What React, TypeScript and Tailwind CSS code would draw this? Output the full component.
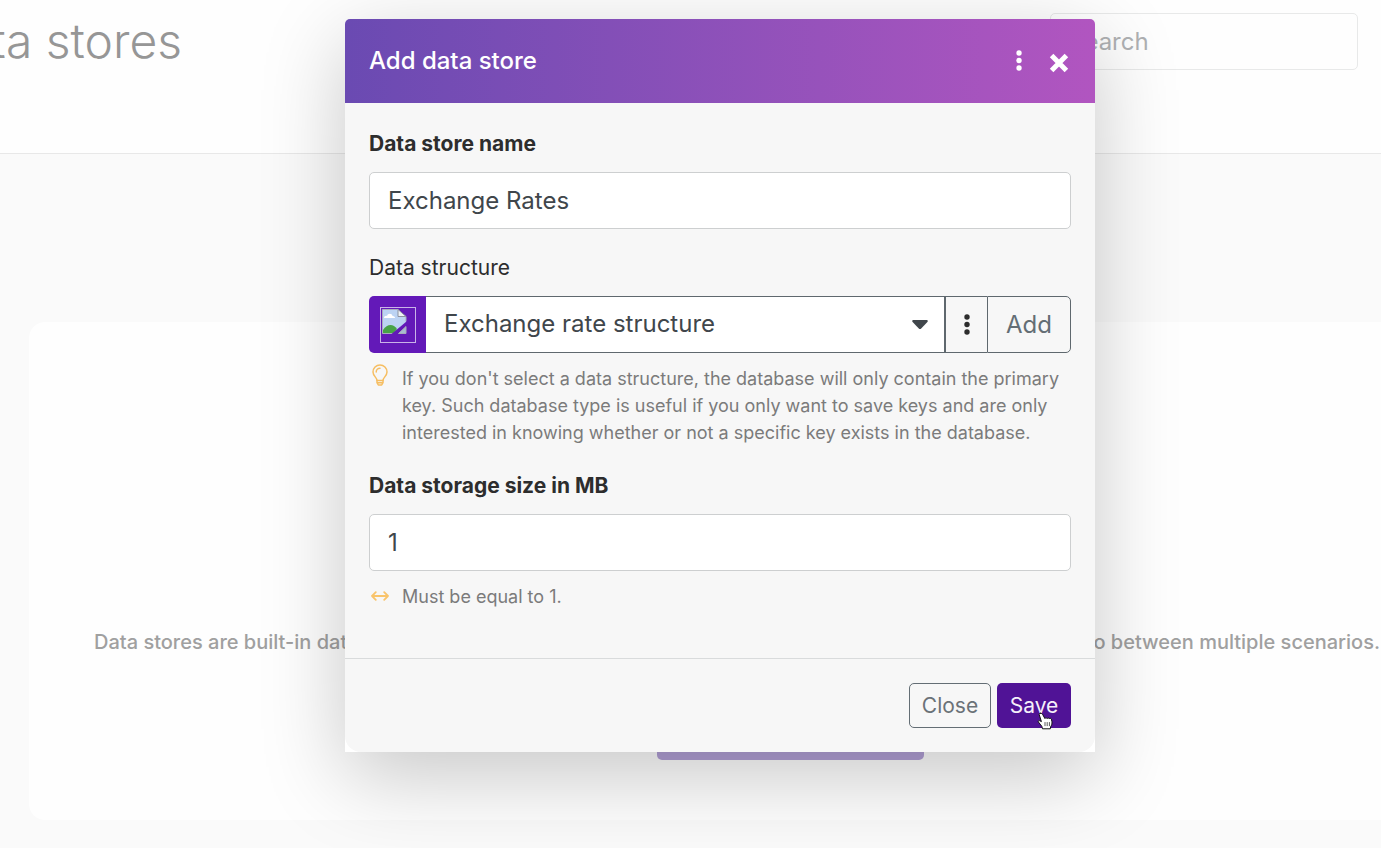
import { useState } from 'react';
import type { ReactNode } from 'react';
import { Plus } from 'lucide-react';

const inputClass =
  'h-[57px] w-full rounded-[5px] border border-[#cdcfd0] bg-white px-[18px] text-2xl text-[#40464b] outline-none';

function Dots({ className }: { className?: string }) {
  return (
    <svg viewBox="0 0 6 22" className={className} fill="currentColor" aria-hidden="true">
      <circle cx="3" cy="3" r="2.7" />
      <circle cx="3" cy="10.5" r="2.7" />
      <circle cx="3" cy="18" r="2.7" />
    </svg>
  );
}

function CloseIcon() {
  return (
    <svg viewBox="0 0 20 20" className="size-5" stroke="currentColor" strokeWidth="5" aria-hidden="true">
      <path d="M2.6 2.6 17.4 17.4M17.4 2.6 2.6 17.4" />
    </svg>
  );
}

function BulbIcon() {
  return (
    <svg viewBox="0 0 18 24" className="h-6 w-[18px]" fill="none" stroke="#f6be62" strokeWidth="1.5" strokeLinecap="round" strokeLinejoin="round" aria-hidden="true">
      <path d="M6 16.5C6 13.5 2 12 2 8a7 7 0 0 1 14 0c0 4-4 5.500-4 8.500Z" />
      <path d="M6 16.500v2.200L7.300 21h3.400l1.300-2.300v-2.200M6.200 18.700h5.600" />
      <path d="M5.200 8A3.800 3.800 0 0 1 9 4.200" />
    </svg>
  );
}

function RangeIcon() {
  return (
    <svg viewBox="0 0 18 12" className="mt-1 h-3 w-[18px]" fill="none" stroke="#f9c46b" strokeWidth="1.8" strokeLinecap="round" strokeLinejoin="round" aria-hidden="true">
      <path d="M1 6h16M4.800 2.200 1 6l3.800 3.800M13.200 2.200 17 6l-3.800 3.800" />
    </svg>
  );
}

// The browser's own "missing image" mark
function BrokenImage() {
  return (
    <svg viewBox="0 0 36 36" className="size-9" aria-hidden="true">
      <rect x="0.5" y="0.5" width="35" height="35" fill="none" stroke="#c9b3e8" />
      <path d="M2.500 2.500h15.500l8 7v7L15 26.500H2.500Z" fill="#bcd3f3" />
      <path d="M4 11c0-2 2-2.500 3-2 .5-3 5-3 5.500 0 2 0 2.500 1 2.500 2Z" fill="#fff" />
      <path d="M3 26v-3c4-6 10-7 14-1l-3 4Z" fill="#48a347" />
      <path d="M18 2.500v7h8Z" fill="#eef2f6" stroke="#8d92a0" />
      <path d="M14 26.500H2.500v-24H18M26 9.500v5" fill="none" stroke="#a9adbb" />
      <path d="M11.500 27 26.500 14.500v4.500L17 27Z" fill="#6319b8" />
      <path d="M26 19.500v7h-7.500Z" fill="#a8bdd0" stroke="#a9adbb" />
    </svg>
  );
}

function HandCursor() {
  return (
    <svg viewBox="0 0 16 18" className="pointer-events-none absolute left-10 top-[29px] h-[18px] w-4" fill="#fff" stroke="#111" strokeLinejoin="round" strokeLinecap="round" aria-hidden="true">
      <path d="M3.700 1.300c-.9-.3-1.700.4-1.500 1.300l2.200 7-1.500-.8C1.800 8.200.8 9 1.400 10l3.400 4.300.7 2.500h7.800l.4-2.300c1.200-1.500 1.500-3 1.200-5l-.5-2.400c-.3-1-1.700-1-1.900-.1-.2-1.100-1.900-1.400-2.300-.4-.4-1.100-2-1-2.300-.1L5.600 2.400c-.3-.7-1-.9-1.900-1.100Z" />
      <path d="M8 10.500v3.200M10.200 10.500v3.200M12.400 10.500v3.200" strokeWidth=".7" />
    </svg>
  );
}

function Hint({ icon, children }: { icon: ReactNode; children: ReactNode }) {
  return (
    <div className="mt-3 flex gap-[13px] pb-px pl-0.5 text-lg/[27px] text-[#7b7b7b]">
      <span className="flex h-[21px] w-[18px] shrink-0 items-center">{icon}</span>
      <p>{children}</p>
    </div>
  );
}

function Background() {
  return (
    <div className="min-h-screen overflow-hidden bg-[#fafafa]">
      <header className="flex h-[154px] items-start justify-between border-b border-[#e8e8e8] bg-[#fefefe]">
        <h1 className="flex w-[182px] justify-end whitespace-nowrap pt-[11px] text-5xl/[60px] font-light text-[#969696]">
          Data stores
        </h1>
        <input
          type="search"
          aria-label="Search"
          placeholder="Search"
          className="mr-[23px] mt-[13px] h-[57px] w-[308px] rounded-[5px] border border-[#e8e9e9] bg-[#fefefe] px-[18px] text-2xl outline-none placeholder:text-[#afb1b3]"
        />
      </header>
      <main className="-mr-[171px] ml-[29px] mt-42 flex h-[498px] flex-col justify-end rounded-2xl bg-[#fefefe] px-[65px] pb-15">
        <p className="flex w-[1286px] justify-between whitespace-nowrap text-xl/8 font-medium text-[#a0a0a0]">
          <span>Data stores are built-in databases</span>
          <span>to between multiple scenarios.</span>
        </p>
        <button type="button" className="mt-[45px] flex h-[57px] w-[267px] items-center justify-center gap-2 self-center rounded-[5px] bg-[#b2a0d6] text-2xl text-white">
          <Plus className="size-5" />
          Add data store
        </button>
      </main>
    </div>
  );
}

function DataStoreForm() {
  const [name, setName] = useState('Exchange Rates');
  const [size, setSize] = useState('1');

  return (
    <form
      role="dialog"
      aria-labelledby="dialog-title"
      onSubmit={(e) => e.preventDefault()}
      className="w-[750px] max-w-full rounded-t-[5px] bg-white shadow-[0_24px_84px_rgba(0,0,0,0.22)]"
    >
      <div className="flex h-[84px] items-center rounded-t-[5px] bg-linear-to-r from-[#6a4ab2] to-[#b155c0] px-6 text-white">
        <h2 id="dialog-title" className="flex-1 text-2xl font-medium">Add data store</h2>
        <button type="button" aria-label="More options" className="mr-[27px]">
          <Dots className="h-[22px] w-1.5" />
        </button>
        <button type="button" aria-label="Close dialog" className="mr-0.5 pt-1">
          <CloseIcon />
        </button>
      </div>

      <div className="rounded-b-2xl bg-[#f7f7f7]">
        <div className="flex flex-col gap-[23px] px-6 pb-[47px] pt-[25px] text-[#2d2d2d]">
          <div>
            <label htmlFor="store-name" className="mb-3 block text-[21px]/8 font-bold">Data store name</label>
            <input id="store-name" className={inputClass} value={name} onChange={(e) => setName(e.target.value)} />
          </div>

          <div>
            <label htmlFor="structure" className="mb-3 block text-[21px]/8">Data structure</label>
            <div className="flex h-[57px]">
              <span className="flex w-[57px] items-center justify-center rounded-l-[5px] bg-[#6319b8]">
                <BrokenImage />
              </span>
              <div className="relative flex-1">
                <select id="structure" className="size-full appearance-none border-y border-r-2 border-[#5f686e] bg-white px-[18px] pb-0.5 text-2xl text-[#40464b] outline-none">
                  <option>Exchange rate structure</option>
                </select>
                <svg viewBox="0 0 16 10" className="pointer-events-none absolute right-[18px] top-6 h-2.5 w-4" fill="#40464b" aria-hidden="true">
                  <path d="M1.500 0h13c1.200 0 1.700 1.100.9 2L9.200 8.500c-.7.700-1.700.7-2.400 0L.6 2C-.2 1.100.3 0 1.500 0Z" />
                </svg>
              </div>
              <button type="button" aria-label="Structure options" className="flex w-[41px] items-center justify-center border-y border-[#5f686e]">
                <Dots className="h-[22px] w-1.5" />
              </button>
              <button type="button" className="w-[84px] rounded-r-[5px] border border-[#5f686e] text-2xl text-[#646e75]">
                Add
              </button>
            </div>
            <Hint icon={<BulbIcon />}>
              If you don't select a data structure, the database will only contain the primary key. Such database type is useful if you only want to save keys and are only interested in knowing whether or not a specific key exists in the database.
            </Hint>
          </div>

          <div>
            <label htmlFor="store-size" className="mb-3 block text-[21px]/8 font-bold">Data storage size in MB</label>
            <input id="store-size" className={inputClass} value={size} onChange={(e) => setSize(e.target.value)} />
            <Hint icon={<RangeIcon />}>Must be equal to 1.</Hint>
          </div>
        </div>

        <div className="flex justify-end gap-1.5 border-t border-[#d9dbdc] p-6 text-[21px]">
          <button type="button" className="h-[45px] w-[82px] rounded-[5px] border border-[#646e75] text-[#6b7277]">Close</button>
          <button type="submit" className="relative h-[45px] w-[74px] rounded-[5px] bg-[#501396] text-[#f5effa]">
            Save
            <HandCursor />
          </button>
        </div>
      </div>
    </form>
  );
}

export default function App() {
  return (
    <div className="relative font-[Inter,sans-serif]">
      <Background />
      <div className="absolute inset-0 flex items-start justify-center overflow-hidden pl-[59px] pt-[19px]">
        <DataStoreForm />
      </div>
    </div>
  );
}
